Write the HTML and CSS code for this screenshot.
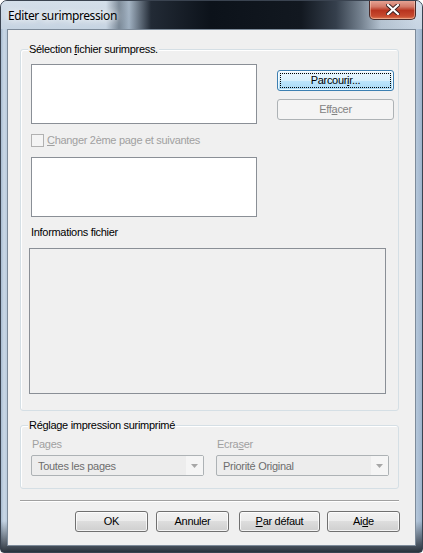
FILE: index.html
```html
<!DOCTYPE html>
<html lang="fr">
<head>
<meta charset="utf-8">
<title>Editer surimpression</title>
<link rel="stylesheet" href="styles.css">
</head>
<body>
<div class="window">
  <div class="titlebar">
    <span class="title">Editer surimpression</span>
    <div class="close">
      <svg width="14" height="11" viewBox="0 0 14 11">
        <path d="M2 1 L12 10 M12 1 L2 10" stroke="#3a2020" stroke-width="4" stroke-linecap="square"/>
        <path d="M2 1 L12 10 M12 1 L2 10" stroke="#ffffff" stroke-width="2.2" stroke-linecap="square"/>
      </svg>
    </div>
  </div>
  <div class="client">
    <div class="group group-file">
      <div class="group-title">Sélection <u>f</u>ichier surimpress.</div>
      <div class="file-row">
        <div class="file-left">
          <div class="textbox"></div>
          <label class="check-row disabled">
            <span class="checkbox"></span>
            <span><u>C</u>hanger 2ème page et suivantes</span>
          </label>
          <div class="textbox"></div>
        </div>
        <div class="file-right">
          <div class="btn btn-focus">Parcour<u>i</u>r...</div>
          <div class="btn btn-disabled">Eff<u>a</u>cer</div>
        </div>
      </div>
      <div class="info-label">Informations fichier</div>
      <div class="info-box"></div>
    </div>

    <div class="group group-settings">
      <div class="group-title">Réglage impression surimprimé</div>
      <div class="combo-row">
        <div class="field">
          <div class="field-label disabled">Pages</div>
          <div class="combo">
            <span class="combo-text">Toutes les pages</span>
            <span class="combo-arrow"><svg width="7" height="4" viewBox="0 0 7 4"><path d="M0 0 H7 L3.5 4 Z" fill="#a7a7a7"/></svg></span>
          </div>
        </div>
        <div class="field">
          <div class="field-label disabled">Ecra<u>s</u>er</div>
          <div class="combo">
            <span class="combo-text">Priorité Original</span>
            <span class="combo-arrow"><svg width="7" height="4" viewBox="0 0 7 4"><path d="M0 0 H7 L3.5 4 Z" fill="#a7a7a7"/></svg></span>
          </div>
        </div>
      </div>
    </div>

    <div class="separator"></div>

    <div class="button-row">
      <div class="btn btn-ok">OK</div>
      <div class="btn btn-cancel">Annuler</div>
      <div class="btn btn-default"><u>P</u>ar défaut</div>
      <div class="btn btn-help">Ai<u>d</u>e</div>
    </div>
  </div>
</div>
</body>
</html>
```
FILE: styles.css
```css
html, body {
  margin: 0;
  padding: 0;
  background: #ffffff;
}

.window {
  box-sizing: border-box;
  width: 423px;
  height: 553px;
  display: flex;
  flex-direction: column;
  padding: 0 6px 6px 6px;
  border: 1px solid #3a4350;
  border-radius: 7px 7px 4px 4px;
  background:
    linear-gradient(to bottom, rgba(18,24,32,0) 0, rgba(18,24,32,0) 520px, rgba(18,24,32,0.9) 553px),
    linear-gradient(to right, #a9bdd2 0, #c9d7e5 3px, #b5c7da 7px, #b5c7da 415px, #a3b8cf 420px, #8ea5bd 423px);
  font-family: "Liberation Sans", Arial, sans-serif;
  font-size: 11px;
  color: #000;
  overflow: hidden;
}

.titlebar {
  height: 28px;
  margin: 0 -6px;
  padding: 0 6px 0 7px;
  display: flex;
  justify-content: space-between;
  align-items: flex-start;
  background:
    linear-gradient(to right,
      rgba(0,0,0,0) 0,
      rgba(0,0,0,0) 105px,
      rgba(70,85,100,0.6) 118px,
      rgba(120,140,160,0.5) 128px,
      rgba(25,33,44,0.95) 150px,
      rgba(12,18,26,1) 210px,
      rgba(18,24,32,1) 300px,
      rgba(45,55,68,0.95) 335px,
      rgba(95,108,122,0.8) 360px,
      rgba(150,165,180,0.4) 380px,
      rgba(0,0,0,0) 415px),
    linear-gradient(to bottom, #d4dfea 0, #c6d4e2 28px);
}

.title {
  font-family: "Noto Sans", "Open Sans", sans-serif;
  font-size: 12px;
  line-height: 16px;
  margin-top: 7px;
  color: #000;
  letter-spacing: -0.4px;
  text-shadow: 0 0 6px #ffffff, 0 0 10px #ffffff;
}

.close {
  box-sizing: border-box;
  width: 47px;
  height: 20px;
  margin-top: -1px;
  border: 1px solid #4a2a28;
  border-top: none;
  border-radius: 0 0 5px 5px;
  background: linear-gradient(to bottom, #e9a99a 0, #d37a68 35%, #b8341f 55%, #c74a2f 85%, #dd7a55 100%);
  box-shadow: inset 0 0 0 1px rgba(255,220,200,0.45);
  display: flex;
  align-items: center;
  justify-content: center;
}

.client {
  flex: 1;
  display: flex;
  flex-direction: column;
  background: #f0f0f0;
  border: 1px solid #7d8b9a;
  padding: 0 16px 0 12px;
}

.group {
  border: 1px solid #d5dfe5;
  border-radius: 3px;
  box-shadow: inset 1px 1px 0 #ffffff;
  display: flex;
  flex-direction: column;
}

.group-title {
  align-self: flex-start;
  display: inline-block;
  line-height: 13px;
  margin: -7px 0 0 7px;
  padding: 0 1px;
  background: #f0f0f0;
  letter-spacing: -0.3px;
}

.group-file {
  margin-top: 19px;
  padding-bottom: 16px;
}

.file-row {
  display: flex;
  margin: 8px 0 0 10px;
}

.file-left {
  width: 226px;
  display: flex;
  flex-direction: column;
}

.textbox {
  box-sizing: border-box;
  height: 60px;
  background: #ffffff;
  border: 1px solid #8a8f96;
}

.check-row {
  display: flex;
  align-items: center;
  height: 13px;
  margin: 10px 0;
  letter-spacing: -0.3px;
  line-height: 13px;
}

.checkbox {
  box-sizing: border-box;
  width: 13px;
  height: 13px;
  border: 1px solid #b1b1b1;
  background: #f4f4f4;
  margin-right: 3px;
}

.disabled {
  color: #a0a0a0;
}

.file-right {
  margin-left: 20px;
  margin-top: 6px;
  display: flex;
  flex-direction: column;
  gap: 8px;
}

.btn {
  box-sizing: border-box;
  height: 21px;
  border: 1px solid #707070;
  border-radius: 3px;
  background: linear-gradient(to bottom, #f2f2f2 0, #ebebeb 50%, #dddddd 50%, #cfcfcf 100%);
  box-shadow: inset 0 0 0 1px rgba(255,255,255,0.75);
  display: flex;
  align-items: center;
  justify-content: center;
  letter-spacing: -0.3px;
  line-height: 13px;
}

.file-right .btn {
  width: 117px;
}

.btn-focus {
  border-color: #3c7fb1;
  background: linear-gradient(to bottom, #eaf6fd 0, #d9f0fc 50%, #bee6fd 50%, #a7d9f5 100%);
  outline: 1px dotted #000000;
  outline-offset: -4px;
}

.btn-disabled {
  border-color: #adb2b5;
  background: #f4f4f4;
  box-shadow: none;
  color: #838383;
}

.info-label {
  line-height: 13px;
  margin: 9px 0 0 10px;
  letter-spacing: -0.3px;
}

.info-box {
  box-sizing: border-box;
  width: 357px;
  height: 146px;
  margin: 9px 0 0 8px;
  background: #f0f0f0;
  border: 1px solid #8a8f96;
}

.group-settings {
  margin-top: 14px;
  padding-bottom: 12px;
}

.combo-row {
  display: flex;
  gap: 12px;
  margin: 6px 0 0 10px;
}

.field {
  display: flex;
  flex-direction: column;
  width: 173px;
}

.field-label {
  line-height: 13px;
  margin-left: 1px;
  letter-spacing: -0.3px;
}

.combo {
  box-sizing: border-box;
  height: 21px;
  margin-top: 4px;
  border: 1px solid #adb2b5;
  border-radius: 2px;
  background: #ededed;
  display: flex;
  align-items: stretch;
  color: #6d6d6d;
}

.combo-text {
  flex: 1;
  display: flex;
  align-items: center;
  padding-left: 6px;
  letter-spacing: -0.3px;
}

.combo-arrow {
  width: 17px;
  background: #f5f5f5;
  display: flex;
  align-items: center;
  justify-content: center;
  padding-top: 1px;
}

.separator {
  height: 0;
  margin-top: 11px;
  border-top: 1px solid #a0a0a0;
  border-bottom: 1px solid #ffffff;
}

.button-row {
  display: flex;
  justify-content: flex-end;
  gap: 8px;
  margin-top: 9px;
  margin-right: -1px;
}

.button-row .btn {
  width: 73px;
}

.button-row .btn-default {
  width: 81px;
  margin: 0 -1px 0 2px;
}
```
